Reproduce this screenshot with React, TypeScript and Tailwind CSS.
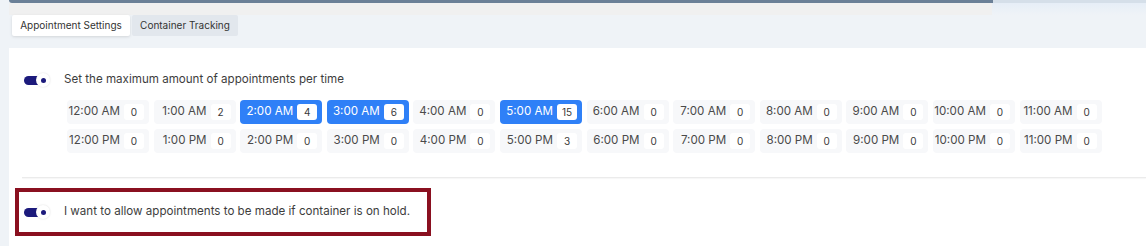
import React from "react";

type Slot = { label: string; count: number; active?: boolean };

const amSlots: Slot[] = [
    { label: "12:00 AM", count: 0 },
    { label: "1:00 AM", count: 2 },
    { label: "2:00 AM", count: 4, active: true },
    { label: "3:00 AM", count: 6, active: true },
    { label: "4:00 AM", count: 0 },
    { label: "5:00 AM", count: 15, active: true },
    { label: "6:00 AM", count: 0 },
    { label: "7:00 AM", count: 0 },
    { label: "8:00 AM", count: 0 },
    { label: "9:00 AM", count: 0 },
    { label: "10:00 AM", count: 0 },
    { label: "11:00 AM", count: 0 },
];

const pmSlots: Slot[] = [
    { label: "12:00 PM", count: 0 },
    { label: "1:00 PM", count: 0 },
    { label: "2:00 PM", count: 0 },
    { label: "3:00 PM", count: 0 },
    { label: "4:00 PM", count: 0 },
    { label: "5:00 PM", count: 3 },
    { label: "6:00 PM", count: 0 },
    { label: "7:00 PM", count: 0 },
    { label: "8:00 PM", count: 0 },
    { label: "9:00 PM", count: 0 },
    { label: "10:00 PM", count: 0 },
    { label: "11:00 PM", count: 0 },
];

const Toggle = () => (
    <div className="relative w-[26px] h-[14px] flex items-center">
        <div className="w-[18px] h-[9px] rounded-full bg-[#1c1a7c]" />
        <div className="absolute right-0 top-0 w-[14px] h-[14px] rounded-full bg-white shadow-[0_0_2px_rgba(0,0,0,0.15)] flex items-center justify-center">
            <div className="w-[5px] h-[5px] rounded-full bg-[#1c1a7c]" />
        </div>
    </div>
);

const SlotCell = ({ slot }: { slot: Slot }) => (
    <div
        className={`h-[24px] flex items-center justify-end pr-[5px] rounded-[4px] ${
            slot.active ? "bg-[#2f80f7] text-white" : "bg-[#f7f8fa] text-[#4a4a4a]"
        }`}
    >
        <span className="text-[11.6px]">{slot.label}</span>
        <span className="ml-[4px] w-[20px] h-[16px] rounded-[3px] bg-white text-[#3a3a3a] text-[10px] flex items-center justify-center">
            {slot.count}
        </span>
    </div>
);

const App = () => {
    return (
        <div className="w-[1146px] h-[246px] bg-[#eff3f7] flex font-['Inter','Noto_Sans',sans-serif] overflow-hidden">
            <div className="w-[9px] shrink-0" />
            <div className="flex-1 flex flex-col">
                <div className="flex h-[3px]">
                    <div className="w-[984px] bg-[#6b8097] rounded-bl-[3px]" />
                    <div className="flex-1 bg-[#d5dfe9]" />
                </div>
                <div className="flex h-[12px]">
                    <div className="w-[983px] bg-[#f0f0f0]" />
                    <div className="flex-1 bg-gradient-to-b from-[#e6eef7] to-[#eff3f7]" />
                </div>
                <div className="h-[33px] flex items-start gap-[2px] pl-[3px]">
                    <div className="h-[21px] w-[118px] bg-white rounded-[2px] shadow-[0_1px_3px_rgba(0,0,0,0.12)] flex items-center justify-center text-[10px] text-[#333]">
                        Appointment Settings
                    </div>
                    <div className="h-[21px] w-[106px] bg-[#e2e7ed] rounded-[2px] flex items-center justify-center text-[10px] text-[#333]">
                        Container Tracking
                    </div>
                </div>
                <div className="flex-1 bg-white flex flex-col">
                    <div className="flex items-center mt-[25px] pl-[15px] h-[14px]">
                        <Toggle />
                        <span className="ml-[14px] text-[11.6px] text-[#3d3d3d]">
                            Set the maximum amount of appointments per time
                        </span>
                    </div>
                    <div className="ml-[58px] mt-[13px] grid grid-cols-[repeat(12,82px)] gap-x-[4.6px] gap-y-[5px]">
                        {amSlots.map((s) => (
                            <SlotCell key={s.label} slot={s} />
                        ))}
                        {pmSlots.map((s) => (
                            <SlotCell key={s.label} slot={s} />
                        ))}
                    </div>
                    <div className="ml-[13px] mt-[24px] h-[1px] bg-[#ebebeb] shadow-[0_1px_1px_rgba(0,0,0,0.04)]" />
                    <div className="ml-[6px] mt-[10px] w-[416px] h-[48px] border-[4px] border-[#8a1020] flex items-center pl-[5px]">
                        <Toggle />
                        <span className="ml-[14px] text-[11.6px] text-[#3d3d3d]">
                            I want to allow appointments to be made if container is on hold.
                        </span>
                    </div>
                </div>
            </div>
        </div>
    );
};

export default App;
